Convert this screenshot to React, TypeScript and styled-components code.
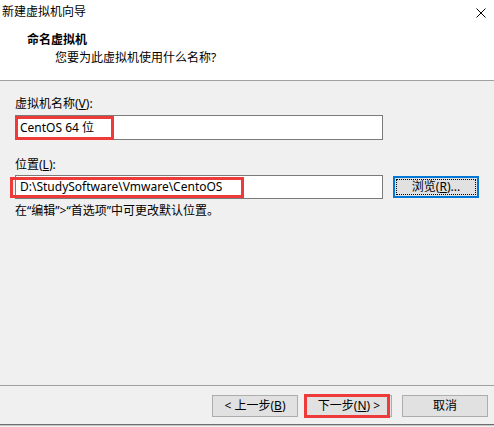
import styled, { createGlobalStyle } from "styled-components";

const GlobalStyle = createGlobalStyle`
  html, body {
    margin: 0;
    padding: 0;
    background: #f0f0f0;
  }
  body {
    font-family: "Noto Sans", "Noto Sans CJK SC", sans-serif;
    font-size: 12px;
    color: #000;
  }
`;

const Window = styled.div`
  width: 494px;
  height: 427px;
  display: flex;
  flex-direction: column;
  background: #f0f0f0;
  overflow: hidden;
`;

const Header = styled.header`
  height: 80px;
  flex-shrink: 0;
  background: #fff;
  border-bottom: 1px solid #a0a0a0;
  display: flex;
  flex-direction: column;
`;

const TitleBar = styled.div`
  height: 24px;
  display: flex;
  align-items: center;
  justify-content: space-between;
  padding: 0 8px 0 2px;
  line-height: 16px;
`;

const CloseIcon = styled.svg`
  width: 10px;
  height: 10px;
  margin-top: 1px;
`;

const PageTitle = styled.div`
  margin: 7px 0 0 27px;
  font-weight: 700;
  line-height: 17px;
`;

const PageSubtitle = styled.div`
  margin: 1px 0 0 55px;
  line-height: 17px;
`;

const Body = styled.main`
  flex: 1;
  display: flex;
  flex-direction: column;
  padding: 15px 15px 0;
`;

const Label = styled.label<{ $gap?: number }>`
  display: block;
  line-height: 16px;
  margin-top: ${({ $gap }) => $gap ?? 0}px;
`;

const FieldRow = styled.div<{ $gap: number }>`
  display: flex;
  align-items: center;
  gap: 10px;
  margin-top: ${({ $gap }) => $gap}px;
`;

const FieldBox = styled.div<{ $height: number }>`
  position: relative;
  width: 368px;
  height: ${({ $height }) => $height}px;
  box-sizing: border-box;
  border: 1px solid #7a7a7a;
  background: #fff;
  display: flex;
  align-items: center;
  padding-left: 4px;
  line-height: 16px;
`;

const Highlight = styled.div<{ $left: number; $top: number; $width: number; $height: number }>`
  position: absolute;
  left: ${({ $left }) => $left}px;
  top: ${({ $top }) => $top}px;
  width: ${({ $width }) => $width}px;
  height: ${({ $height }) => $height}px;
  box-sizing: border-box;
  border: 3px solid #ef3a3a;
  pointer-events: none;
`;

const BrowseButton = styled.button`
  width: 86px;
  height: 22px;
  box-sizing: border-box;
  border: 2px solid #0078d7;
  background: #e1e1e1;
  font: inherit;
  padding: 0;
  position: relative;
  line-height: 16px;
  &::after {
    content: "";
    position: absolute;
    inset: 1px;
    border: 1px dotted #000;
  }
`;

const Hint = styled.div`
  margin-top: 4px;
  line-height: 16px;
`;

const Footer = styled.footer`
  height: 40px;
  flex-shrink: 0;
  border-top: 1px solid #a0a0a0;
  border-bottom: 1px solid #6d6d6d;
  display: flex;
  align-items: flex-start;
  padding: 9px 0 0 212px;
  box-sizing: border-box;
  box-shadow: 0 1px 0 #c8c8c8;
  margin-bottom: 2px;
`;

const NavButton = styled.button<{ $gap?: number }>`
  position: relative;
  width: 86px;
  height: 22px;
  box-sizing: border-box;
  margin-left: ${({ $gap }) => $gap ?? 0}px;
  border: 1px solid #adadad;
  background: #e1e1e1;
  font: inherit;
  padding: 0;
  line-height: 16px;
  color: #000;
`;

export default function App() {
  return (
    <>
      <GlobalStyle />
      <Window>
        <Header>
          <TitleBar>
            <span>新建虚拟机向导</span>
            <CloseIcon viewBox="0 0 10 10">
              <path d="M0.5 0.5 L9.5 9.5 M9.5 0.5 L0.5 9.5" stroke="#000" strokeWidth="1" />
            </CloseIcon>
          </TitleBar>
          <PageTitle>命名虚拟机</PageTitle>
          <PageSubtitle>您要为此虚拟机使用什么名称?</PageSubtitle>
        </Header>
        <Body>
          <Label>
            虚拟机名称(<u>V</u>):
          </Label>
          <FieldRow $gap={3}>
            <FieldBox $height={25}>
              CentOS 64 位
              <Highlight $left={-1} $top={0} $width={99} $height={24} />
            </FieldBox>
          </FieldRow>
          <Label $gap={17}>
            位置(<u>L</u>):
          </Label>
          <FieldRow $gap={2}>
            <FieldBox $height={24}>
              D:\StudySoftware\Vmware\CentoOS
              <Highlight $left={-6} $top={1} $width={234} $height={21} />
            </FieldBox>
            <BrowseButton>
              浏览(<u>R</u>)...
            </BrowseButton>
          </FieldRow>
          <Hint>在“编辑”&gt;“首选项”中可更改默认位置。</Hint>
        </Body>
        <Footer>
          <NavButton>
            &lt; 上一步(<u>B</u>)
          </NavButton>
          <NavButton $gap={8}>
            下一步(<u>N</u>) &gt;
            <Highlight $left={-3} $top={-2} $width={86} $height={24} />
          </NavButton>
          <NavButton $gap={10}>取消</NavButton>
        </Footer>
      </Window>
    </>
  );
}
